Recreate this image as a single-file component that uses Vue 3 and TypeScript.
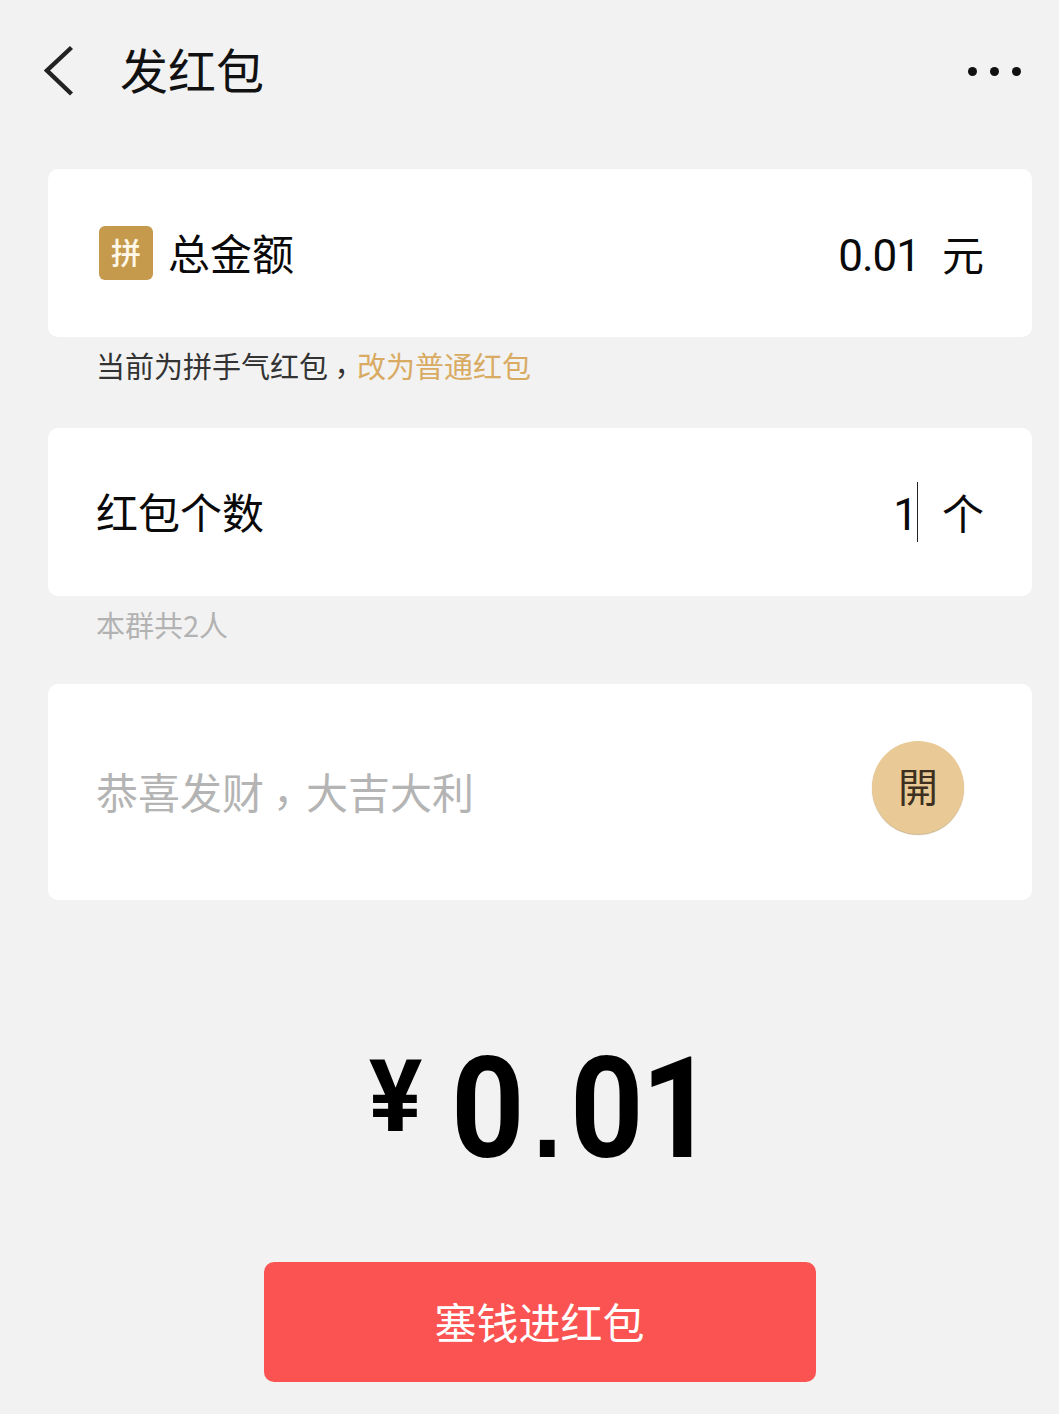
<script setup lang="ts">
const title = "发红包";
const count = "1";
</script>

<template>
  <div class="page">
    <header class="top-bar">
      <div class="top-left">
        <svg class="back-icon" width="30" height="52" viewBox="0 0 30 52" fill="none">
          <path d="M27.5 2.5 L3 25.5 L27.5 49" stroke="#222" stroke-width="4.4" />
        </svg>
        <span class="title">{{ title }}</span>
      </div>
      <div class="more-icon">
        <i></i><i></i><i></i>
      </div>
    </header>

    <section class="card row-card">
      <div class="label-wrap">
        <span class="badge">拼</span>
        <span class="label">总金额</span>
      </div>
      <div class="value-wrap">
        <span class="value">0.01</span>
        <span class="unit">元</span>
      </div>
    </section>
    <p class="note">当前为拼手气红包<span class="comma small">，</span><span class="link">改为普通红包</span></p>

    <section class="card row-card">
      <span class="label plain">红包个数</span>
      <div class="value-wrap">
        <span class="value count">{{ count }}</span>
        <span class="caret"></span>
        <span class="unit">个</span>
      </div>
    </section>
    <p class="note hint">本群共2人</p>

    <section class="card blessing-card">
      <span class="placeholder">恭喜发财<span class="comma">，</span>大吉大利</span>
      <span class="open-btn">開</span>
    </section>

    <div class="amount">
      <span class="yen">¥</span>
      <span class="sum">0<span class="dot">.</span><span class="tight">0</span>1</span>
    </div>

    <button type="button" class="submit"><span>塞钱进红包</span></button>
  </div>
</template>

<style scoped>
.page {
  width: 1059px;
  height: 1414px;
  box-sizing: border-box;
  padding: 0 27px 0 48px;
  background: #f2f2f2;
  overflow: hidden;
  font-family: "Noto Sans CJK SC", "Noto Sans", sans-serif;
  color: #111;
}

.top-bar {
  height: 169px;
  display: flex;
  justify-content: space-between;
  align-items: flex-start;
  padding-top: 45px;
  box-sizing: border-box;
}

.top-left {
  display: flex;
  align-items: center;
  height: 52px;
  margin-left: -4px;
}

.back-icon {
  display: block;
}

.title {
  margin-left: 46px;
  margin-top: -6px;
  font-size: 48px;
  line-height: 52px;
  color: #111;
}

.more-icon {
  display: flex;
  gap: 13px;
  height: 52px;
  align-items: center;
  margin-right: 11px;
}

.more-icon i {
  display: block;
  width: 9px;
  height: 9px;
  border-radius: 50%;
  background: #111;
}

.card {
  background: #fff;
  border-radius: 10px;
}

.row-card {
  height: 168px;
  display: flex;
  justify-content: space-between;
  align-items: center;
  padding: 0 48px 0 49px;
  box-sizing: border-box;
}

.label-wrap {
  display: flex;
  align-items: center;
  gap: 15px;
  margin-left: 2px;
}

.badge {
  width: 54px;
  height: 54px;
  border-radius: 6px;
  background: #c59a4d;
  color: #fff8e8;
  font-size: 30px;
  font-weight: 500;
  line-height: 50px;
  text-align: center;
}

.label {
  font-size: 42px;
  line-height: 50px;
  margin-top: -2px;
  color: #0a0a0a;
}

.plain {
  margin-left: -1px;
}

.value-wrap {
  display: flex;
  align-items: center;
}

.value {
  font-family: Roboto, "Noto Sans", sans-serif;
  font-size: 44px;
  line-height: 50px;
  padding-top: 6px;
  letter-spacing: -1px;
  color: #0a0a0a;
}

.caret {
  width: 1px;
  height: 60px;
  background: #222;
  margin-right: 24px;
}

.unit {
  font-size: 42px;
  line-height: 50px;
  margin-left: 22px;
  color: #0a0a0a;
}

.caret + .unit {
  margin-left: 0;
}

.comma {
  display: inline-block;
  width: 42px;
  text-align: center;
  font-feature-settings: "palt";
  transform: translate(1px, -3px);
}

.comma.small {
  width: 29px;
  transform: translate(1px, -2px);
}

.note {
  margin: 0;
  height: 91px;
  padding: 7px 0 0 48px;
  box-sizing: border-box;
  font-size: 29px;
  line-height: 42px;
  color: #333;
}

.link {
  color: #d9ab62;
}

.hint {
  height: 88px;
  color: #b2b2b2;
}

.blessing-card {
  height: 216px;
  display: flex;
  justify-content: space-between;
  align-items: center;
  padding: 0 68px 10px 48px;
  box-sizing: border-box;
}

.placeholder {
  font-size: 42px;
  line-height: 50px;
  margin-top: 8px;
  color: #b4b4b4;
}

.open-btn {
  width: 92px;
  height: 93px;
  border-radius: 50%;
  background: #e9c995;
  box-shadow: 0 1px 1px #c9b48f;
  color: #3d3020;
  font-size: 40px;
  line-height: 88px;
  text-align: center;
}

.amount {
  height: 362px;
  display: flex;
  justify-content: center;
  align-items: flex-start;
  padding: 129px 0 0 17px;
  box-sizing: border-box;
  font-family: Roboto, "Noto Sans", sans-serif;
  color: #000;
}

.yen {
  font-size: 100px;
  font-weight: 700;
  line-height: 100px;
  margin-top: 18px;
  margin-right: 16px;
}

.sum {
  display: inline-block;
  font-size: 141px;
  font-weight: 700;
  line-height: 160px;
  transform: scaleX(0.91);
}

.dot {
  font-family: "Liberation Sans", sans-serif;
  font-size: 115px;
  font-weight: 700;
  margin: 0 9px;
}

.tight {
  letter-spacing: -3px;
}

.submit {
  display: block;
  width: 552px;
  height: 120px;
  margin: 0 auto;
  position: relative;
  left: -0.5px;
  border: none;
  border-radius: 10px;
  background: #fb5352;
  color: #fff;
  font-family: inherit;
  font-size: 42px;
  padding: 0 0 4px;
}
</style>
<style>
html, body { background: #f2f2f2; }
</style>
